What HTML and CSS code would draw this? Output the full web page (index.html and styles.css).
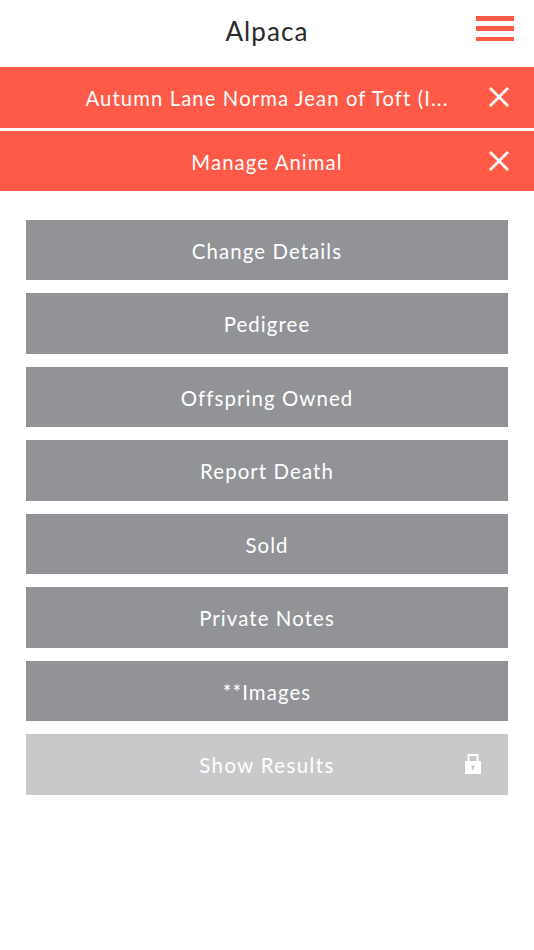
FILE: index.html
```html
<!DOCTYPE html>
<html lang="en">
<head>
<meta charset="utf-8">
<title>Alpaca</title>
<link rel="stylesheet" href="styles.css">
</head>
<body>
<header class="top">
  <h1 class="title">Alpaca</h1>
  <button class="burger" aria-label="Menu"><span></span><span></span><span></span></button>
</header>
<div class="crumb">
  <span class="crumb-text">Autumn Lane Norma Jean of Toft (I...</span>
  <svg class="close" viewBox="0 0 20 20"><path d="M1 1L19 19M19 1L1 19"/></svg>
</div>
<div class="crumb">
  <span class="crumb-text">Manage Animal</span>
  <svg class="close" viewBox="0 0 20 20"><path d="M1 1L19 19M19 1L1 19"/></svg>
</div>
<main class="list">
  <a class="item">Change Details</a>
  <a class="item">Pedigree</a>
  <a class="item">Offspring Owned</a>
  <a class="item">Report Death</a>
  <a class="item">Sold</a>
  <a class="item">Private Notes</a>
  <a class="item">**Images</a>
  <a class="item disabled">Show Results
    <svg class="lock" viewBox="0 0 16 20"><path fill-rule="evenodd" d="M0 7H2.500V0H13.500V7H16V20H0ZM4.500 2V7H11.500V2ZM6.500 11.500H9.500V13L8.700 14V16H7.300V14L6.500 13Z"/></svg>
  </a>
</main>
</body>
</html>
```
FILE: styles.css
```css
* { box-sizing: border-box; }
html, body { margin: 0; padding: 0; background: #fff; }
body { width: 534px; height: 950px; overflow: hidden; font-family: "Lato", "Noto Sans", sans-serif; }
.top { height: 67px; display: flex; align-items: center; justify-content: center; position: relative; }
.title { margin: 0 0 6px; font-size: 26px; font-weight: 400; letter-spacing: 1.1px; color: #282a2c; }
.burger { position: absolute; left: 476px; top: 16px; width: 38px; height: 25px; padding: 0; border: 0; background: none; display: flex; flex-direction: column; justify-content: space-between; }
.burger span { display: block; height: 4.500px; background: #ff5a47; }
.crumb { height: 60.500px; margin-bottom: 3px; padding-top: 2px; background: #ff5a47; color: #fff; display: flex; align-items: center; justify-content: center; position: relative; }
.crumb-text { font-size: 20.300px; letter-spacing: 1.100px; }
.close { position: absolute; left: 488.500px; top: 20px; width: 20px; height: 20px; fill: none; stroke: #fff; stroke-width: 2.600; }
.list { padding: 25.500px 26px 0; display: flex; flex-direction: column; gap: 13px; }
.item { height: 60.500px; padding-top: 1.500px; background: #929397; color: #fff; display: flex; align-items: center; justify-content: center; font-size: 20.400px; letter-spacing: 1.100px; position: relative; }
.item.disabled { background: #c9c9cb; letter-spacing: 1.400px; }
.lock { position: absolute; left: 439px; top: 20px; width: 16px; height: 20px; fill: #fff; }
```
